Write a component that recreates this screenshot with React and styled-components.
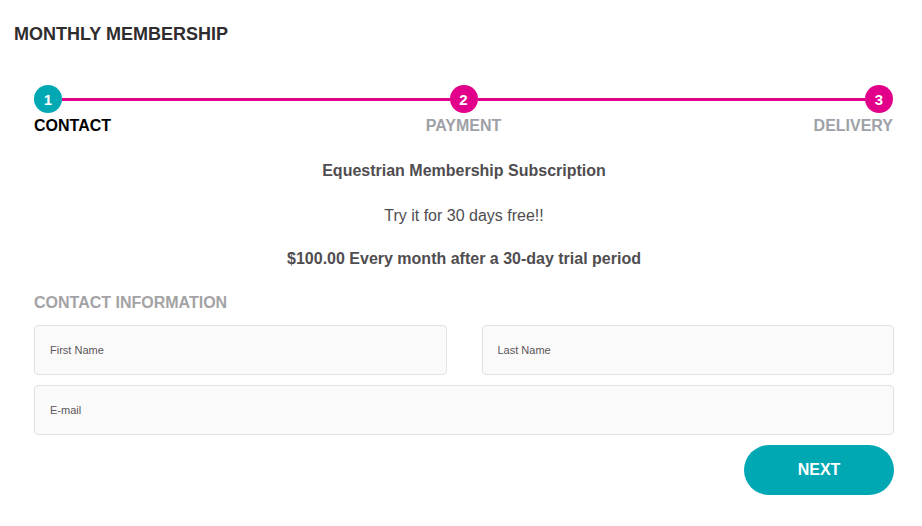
import React from 'react';
import styled, { createGlobalStyle } from 'styled-components';

const GlobalStyle = createGlobalStyle`
  body {
    margin: 0;
    background: #ffffff;
    font-family: 'Liberation Sans', Arial, sans-serif;
  }
`;

const TEAL = '#00a8b4';
const PINK = '#e2008b';

const steps = [
  { num: 1, label: 'CONTACT', active: true },
  { num: 2, label: 'PAYMENT' },
  { num: 3, label: 'DELIVERY' },
];

const App = () => {
  return (
    <Page>
      <GlobalStyle />
      <Title>MONTHLY MEMBERSHIP</Title>
      <Content>
        <StepTrack>
          {steps.map((s, i) => (
            <React.Fragment key={s.num}>
              {i > 0 && <Connector />}
              <StepDot active={s.active}>{s.num}</StepDot>
            </React.Fragment>
          ))}
        </StepTrack>
        <StepLabels>
          {steps.map((s) => (
            <StepLabel key={s.num} active={s.active}>
              {s.label}
            </StepLabel>
          ))}
        </StepLabels>

        <Plan>
          <PlanName>Equestrian Membership Subscription</PlanName>
          <PlanTrial>Try it for 30 days free!!</PlanTrial>
          <PlanPrice>$100.00 Every month after a 30-day trial period</PlanPrice>
        </Plan>

        <SectionTitle>CONTACT INFORMATION</SectionTitle>
        <Form>
          <FieldRow>
            <Field placeholder="First Name" />
            <Field placeholder="Last Name" />
          </FieldRow>
          <Field placeholder="E-mail" />
          <Actions>
            <NextButton>NEXT</NextButton>
          </Actions>
        </Form>
      </Content>
    </Page>
  );
};

export default App;

const Page = styled.div`
  padding: 24px 28px 20px 14px;
  color: #333;
`;

const Title = styled.h1`
  margin: 0;
  font-size: 18px;
  font-weight: 700;
  color: #2f2c2e;
  line-height: 20px;
`;

const Content = styled.div`
  padding-left: 20px;
  margin-top: 41px;
`;

const StepTrack = styled.div`
  display: flex;
  align-items: center;
  height: 28px;
  padding-right: 1px;
`;

const Connector = styled.div`
  flex: 1;
  height: 3px;
  background: ${PINK};
`;

const StepDot = styled.div`
  width: 28px;
  height: 28px;
  border-radius: 50%;
  background: ${({ active }) => (active ? TEAL : PINK)};
  color: #fff;
  font-weight: 700;
  font-size: 15px;
  display: flex;
  align-items: center;
  justify-content: center;
  flex-shrink: 0;
`;

const StepLabels = styled.div`
  display: grid;
  grid-template-columns: 1fr 1fr 1fr;
  margin-top: 4px;
  padding-right: 1px;

  & > :nth-child(2) {
    text-align: center;
  }
  & > :nth-child(3) {
    text-align: right;
  }
`;

const StepLabel = styled.div`
  font-size: 16px;
  font-weight: 700;
  line-height: 18px;
  color: ${({ active }) => (active ? '#000' : '#9ea1a7')};
`;

const Plan = styled.div`
  display: flex;
  flex-direction: column;
  align-items: center;
  margin-top: 27px;
  color: #4f4d4f;
  font-size: 16px;
  line-height: 18px;
`;

const PlanName = styled.div`
  font-weight: 700;
`;

const PlanTrial = styled.div`
  margin-top: 27px;
`;

const PlanPrice = styled.div`
  margin-top: 25px;
  font-weight: 700;
`;

const SectionTitle = styled.h2`
  margin: 26px 0 0;
  font-size: 16px;
  line-height: 18px;
  font-weight: 700;
  color: #a3a3a5;
`;

const Form = styled.div`
  display: flex;
  flex-direction: column;
  gap: 10px;
  margin-top: 13px;
`;

const FieldRow = styled.div`
  display: grid;
  grid-template-columns: 1fr 1fr;
  column-gap: 35px;
`;

const Field = styled.input`
  box-sizing: border-box;
  width: 100%;
  height: 50px;
  padding: 0 15px;
  border: 1px solid #e2e2e2;
  border-radius: 4px;
  background: #fafafa;
  font-family: 'Liberation Sans', Arial, sans-serif;
  font-size: 11px;
  color: #444;
  outline: none;

  &::placeholder {
    color: #5a5659;
  }
`;

const Actions = styled.div`
  display: flex;
  justify-content: flex-end;
`;

const NextButton = styled.button`
  width: 150px;
  height: 50px;
  border: none;
  border-radius: 25px;
  background: ${TEAL};
  color: #fff;
  font-family: 'Liberation Sans', Arial, sans-serif;
  font-size: 16px;
  font-weight: 700;
  cursor: pointer;
`;
